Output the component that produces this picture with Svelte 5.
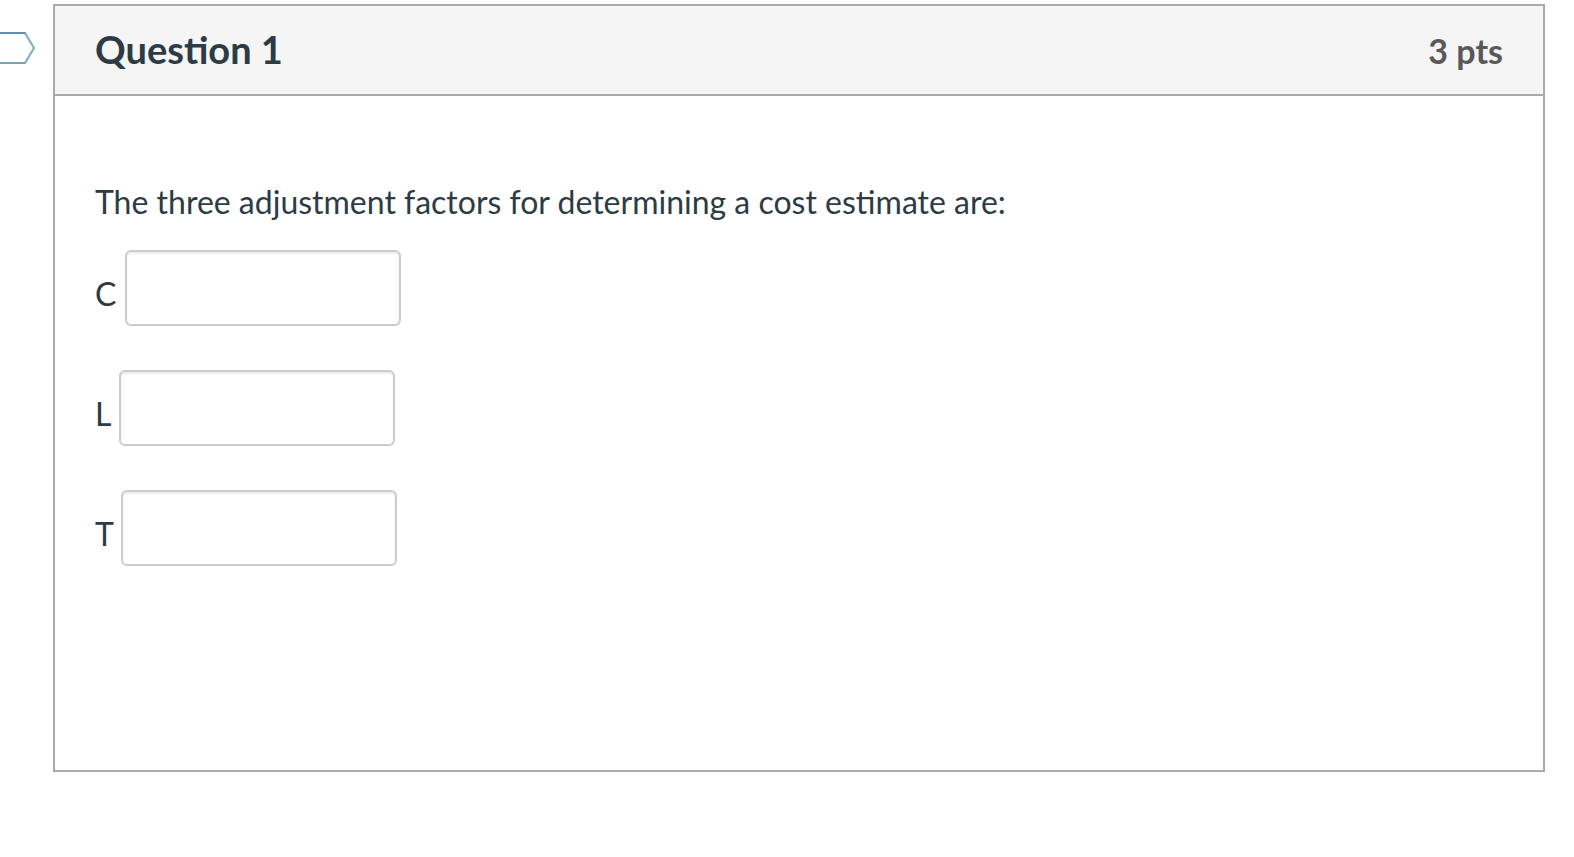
<script lang="ts">
  const title = 'Question 1';
  const points = 3;
  const prompt = 'The three adjustment factors for determining a cost estimate are:';
  const blanks = ['C', 'L', 'T'];

  let answers = $state(['', '', '']);
  let flagged = $state(false);
</script>

<div class="question-holder">
  <button
    type="button"
    class="flag"
    aria-label="Flag question"
    aria-pressed={flagged}
    onclick={() => (flagged = !flagged)}
  >
    <svg width="36" height="34" viewBox="0 0 36 34" fill="none" aria-hidden="true">
      <path d="M25 2L34 17L25 32" stroke="#8fb3c5" stroke-width="2.4" />
      <path d="M0 2H25.5" stroke="#5f91ab" stroke-width="2" />
      <path d="M0 32H25.5" stroke="#7ba3b8" stroke-width="2" />
    </svg>
  </button>

  <section class="question">
    <header class="header">
      <h2 class="name">{title}</h2>
      <span class="points">{points} pts</span>
    </header>

    <div class="text">
      <p class="prompt">{prompt}</p>
      {#each blanks as blank, i}
        <p class="blank">
          <label for="blank-{i}">{blank}</label>
          <input id="blank-{i}" type="text" autocomplete="off" bind:value={answers[i]} />
        </p>
      {/each}
    </div>
  </section>
</div>

<style>
  :global(body) {
    background: #fff;
  }

  .question-holder {
    display: flex;
    align-items: flex-start;
    gap: 17px;
    padding: 4px 29px 0 0;
    font-family: Lato, "Liberation Sans", sans-serif;
    font-size: 32px;
    line-height: 48px;
    color: #2d3b45;
  }

  .flag {
    flex: none;
    margin: 27px 0 0;
    padding: 0;
    border: 0;
    background: none;
    cursor: pointer;
  }

  .flag svg {
    display: block;
  }

  .question {
    flex: 1;
    border: 2px solid #aaa;
  }

  .header {
    display: flex;
    align-items: baseline;
    justify-content: space-between;
    height: 88px;
    box-sizing: border-box;
    padding: 19px 40px 0;
    background: #f5f5f5;
  }

  .name {
    margin: 0;
    font-size: 38px;
    font-weight: 700;
  }

  .points {
    font-size: 34px;
    font-weight: 700;
    color: #595959;
  }

  .text {
    padding: 82px 40px 160px;
    border-top: 2px solid #aaa;
  }

  .prompt {
    margin: 0 0 24px;
  }

  .blank {
    margin: 0 0 24px;
  }

  input {
    box-sizing: border-box;
    width: 276px;
    height: 76px;
    margin: 0 0 20px;
    padding: 16px;
    border: 2px solid #ccc;
    border-radius: 6px;
    background: #fff;
    box-shadow: inset 0 2px 2px rgba(0, 0, 0, 0.075);
    color: inherit;
    font: inherit;
    vertical-align: middle;
  }
</style>
